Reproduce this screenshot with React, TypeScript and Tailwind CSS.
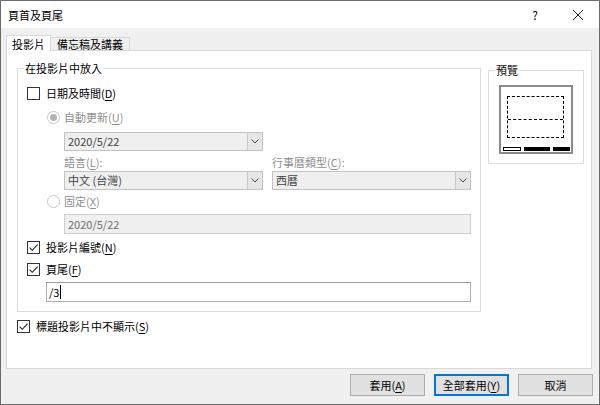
import type { ReactNode } from 'react'

const M = ({ children }: { children: ReactNode }) => <span className="underline underline-offset-2">{children}</span>

const Check = ({ checked }: { checked?: boolean }) => (
  <span className="flex h-[13px] w-[13px] shrink-0 items-center justify-center border border-[#333] bg-white">
    {checked && (
      <svg width="11" height="11" viewBox="0 0 11 11">
        <path d="M1.6 5.6l2.7 2.7L9.6 2.6" fill="none" stroke="#222" strokeWidth="1.1" />
      </svg>
    )}
  </span>
)

const Radio = ({ on }: { on?: boolean }) => (
  <span className="flex h-[13px] w-[13px] shrink-0 items-center justify-center rounded-full border border-[#c8c8c8] bg-white">
    {on && <span className="h-[7px] w-[7px] rounded-full bg-[#b4b4b4]" />}
  </span>
)

const Select = ({ text, w }: { text: string; w: string }) => (
  <div className={`flex h-[19px] ${w} items-stretch border border-[#c2c2c2] bg-[#efefef]`}>
    <span className="flex-1 pl-[3px] text-[11px] leading-[17px] text-[#444]">{text}</span>
    <span className="flex w-[15px] items-center justify-center border-l border-[#c9c9c9] bg-[#e6e6e6]">
      <svg width="8" height="5" viewBox="0 0 8 5">
        <polyline points="0.5,0.5 4,4 7.5,0.5" fill="none" stroke="#444" strokeWidth="1" />
      </svg>
    </span>
  </div>
)

const Button = ({ children, focused }: { children: ReactNode; focused?: boolean }) => (
  <button
    type="button"
    className={`h-[22px] w-[75px] bg-[#e1e1e1] text-[11px] leading-[18px] text-black ${
      focused ? 'border-2 border-[#0078d7]' : 'border border-[#adadad]'
    }`}
  >
    {children}
  </button>
)

export default function App() {
  return (
    <div className="flex h-[405px] w-[600px] flex-col border border-[#6b6b6b] bg-[#f0f0f0] font-['Noto_Sans_CJK_TC','Liberation_Sans',sans-serif] font-normal text-black">
      <div className="flex h-[27px] items-center bg-white pl-[7px]">
        <span className="text-[11px] leading-[16px]">頁首及頁尾</span>
        <span className="ml-auto text-[12px] leading-[16px]">?</span>
        <span className="ml-[34px] mr-[15px] flex h-[12px] w-[12px] items-center justify-center">
          <svg width="12" height="12" viewBox="0 0 12 12">
            <path d="M1 1l10 10M11 1L1 11" stroke="#222" strokeWidth="1" />
          </svg>
        </span>
      </div>

      <div className="flex h-[22px] items-end pl-[5px]">
        <div className="relative z-10 -mb-px flex h-[16px] items-center border border-b-0 border-[#d9d9d9] bg-white px-[5px] text-[11px] leading-[14px]">
          投影片
        </div>
        <div className="flex h-[13px] items-center border border-b-0 border-l-0 border-[#d9d9d9] bg-[#f0f0f0] px-[6px] text-[11px] leading-[13px]">
          備忘稿及講義
        </div>
      </div>

      <div className="ml-[5px] mr-[7px] h-[319px] border border-[#d9d9d9] bg-white">
        <div className="flex items-start">
          <fieldset className="ml-[10px] mt-[9px] w-[464px] border border-[#dcdcdc] p-0">
            <legend className="ml-[6px] px-[1px] text-[11px] leading-[16px]">在投影片中放入</legend>
            <div className="flex flex-col pb-[9px] pl-[9px] text-[11px]">
              <div className="mt-[8px] flex h-[18px] items-center gap-[6px]">
                <Check />
                <span className="leading-[16px]">
                  日期及時間(<M>D</M>)
                </span>
              </div>
              <div className="mt-[6px] flex h-[18px] items-center gap-[4px] pl-[20px]">
                <Radio on />
                <span className="leading-[16px] text-[#8f8f8f]">
                  自動更新(<M>U</M>)
                </span>
              </div>
              <div className="ml-[37px] mt-[6px]">
                <Select text="2020/5/22" w="w-[199px]" />
              </div>
              <div className="ml-[37px] mt-[3px] flex h-[16px] items-center text-[#8f8f8f]">
                <span className="w-[208px] leading-[16px]">
                  語言(<M>L</M>):
                </span>
                <span className="leading-[16px]">
                  行事曆類型(<M>C</M>):
                </span>
              </div>
              <div className="ml-[37px] mt-px flex gap-[9px]">
                <Select text="中文 (台灣)" w="w-[199px]" />
                <Select text="西曆" w="w-[199px]" />
              </div>
              <div className="mt-[2px] flex h-[18px] items-center gap-[4px] pl-[20px]">
                <Radio />
                <span className="leading-[16px] text-[#8f8f8f]">
                  固定(<M>X</M>)
                </span>
              </div>
              <div className="ml-[37px] mt-[4px] flex h-[20px] w-[407px] items-center border border-[#cfcfcf] bg-[#f0f0f0] pl-[3px] leading-[16px] text-[#6d6d6d]">
                2020/5/22
              </div>
              <div className="mt-[4px] flex h-[18px] items-center gap-[6px]">
                <Check checked />
                <span className="leading-[16px]">
                  投影片編號(<M>N</M>)
                </span>
              </div>
              <div className="mt-[4px] flex h-[18px] items-center gap-[6px]">
                <Check checked />
                <span className="leading-[16px]">
                  頁尾(<M>F</M>)
                </span>
              </div>
              <div className="ml-[19px] mt-[4px] flex h-[20px] w-[425px] items-center border border-[#adadad] border-t-[#9a9a9a] bg-white pl-[2px] leading-[16px]">
                /3<span className="ml-px h-[14px] w-px bg-black" />
              </div>
            </div>
          </fieldset>

          <fieldset className="ml-[7px] mt-[11px] w-[96px] border border-[#dcdcdc] p-0">
            <legend className="ml-[6px] px-[1px] text-[11px] leading-[16px]">預覽</legend>
            <div className="mb-[9px] ml-[10px] mt-[7px] flex h-[69px] w-[74px] flex-col border-2 border-[#8a8a8a] bg-white">
              <div className="ml-[6px] mt-[9px] h-[42px] w-[57px] border border-dashed border-black">
                <div className="h-[23px] border-b border-dashed border-black" />
              </div>
              <div className="ml-[2px] mt-auto flex gap-[3px] pb-[1px]">
                <span className="h-[4px] w-[18px] border border-black bg-white" />
                <span className="h-[4px] w-[26px] bg-black" />
                <span className="h-[4px] w-[17px] bg-black" />
              </div>
            </div>
          </fieldset>
        </div>

        <div className="ml-[10px] mt-[5px] flex h-[18px] items-center gap-[6px] text-[11px]">
          <Check checked />
          <span className="leading-[16px]">
            標題投影片中不顯示(<M>S</M>)
          </span>
        </div>
      </div>

      <div className="mt-[5px] flex justify-end gap-[9px] pr-[6px]">
        <Button>
          套用(<M>A</M>)
        </Button>
        <Button focused>
          全部套用(<M>Y</M>)
        </Button>
        <Button>取消</Button>
      </div>
    </div>
  )
}
